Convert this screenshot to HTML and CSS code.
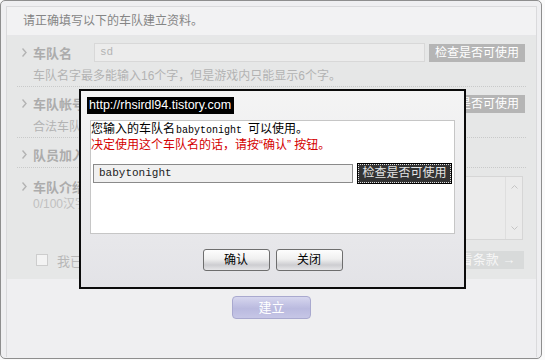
FILE: index.html
```html
<!DOCTYPE html>
<html lang="zh-CN">
<head>
    <meta charset="UTF-8">
    <title>车队建立</title>
    <link rel="stylesheet" href="styles.css">
</head>
<body>
<div class="frame">
    <div class="panel">
        <div class="notice">请正确填写以下的车队建立资料。</div>
        <div class="team-form">
            <div class="row">
                <div class="field">
                    <span class="arrow"><svg width="5" height="9" viewBox="0 0 5 9"><polyline points="0.5,0.5 4,4.5 0.5,8.5" fill="none" stroke="#b3b3b3" stroke-width="1.4"/></svg></span>
                    <span class="label">车队名</span>
                    <span class="text-input">sd</span>
                    <span class="btn-check">检查是否可使用</span>
                </div>
                <p class="hint">车队名字最多能输入16个字，但是游戏内只能显示6个字。</p>
            </div>
            <div class="row">
                <div class="field">
                    <span class="arrow"><svg width="5" height="9" viewBox="0 0 5 9"><polyline points="0.5,0.5 4,4.5 0.5,8.5" fill="none" stroke="#b3b3b3" stroke-width="1.4"/></svg></span>
                    <span class="label">车队帐号</span>
                    <span class="text-input"></span>
                    <span class="btn-check">检查是否可使用</span>
                </div>
                <p class="hint">合法车队</p>
            </div>
            <div class="row">
                <div class="field">
                    <span class="arrow"><svg width="5" height="9" viewBox="0 0 5 9"><polyline points="0.5,0.5 4,4.5 0.5,8.5" fill="none" stroke="#b3b3b3" stroke-width="1.4"/></svg></span>
                    <span class="label">队员加入方式</span>
                </div>
            </div>
            <div class="row row-intro">
                <div class="intro-side">
                    <div class="field">
                        <span class="arrow"><svg width="5" height="9" viewBox="0 0 5 9"><polyline points="0.5,0.5 4,4.5 0.5,8.5" fill="none" stroke="#b3b3b3" stroke-width="1.4"/></svg></span>
                        <span class="label">车队介绍</span>
                    </div>
                    <p class="hint">0/100汉字</p>
                </div>
                <div class="text-area">
                    <div class="scroll">
                        <svg width="7" height="4" viewBox="0 0 7 4"><polyline points="0.5,3.5 3.5,0.5 6.5,3.5" fill="none" stroke="#c4c4c4"/></svg>
                        <svg width="7" height="4" viewBox="0 0 7 4"><polyline points="0.5,0.5 3.5,3.5 6.5,0.5" fill="none" stroke="#c4c4c4"/></svg>
                    </div>
                </div>
            </div>
            <div class="agree">
                <span class="check-box"></span>
                <span class="agree-text">我已经阅读并同意车队条款</span>
                <span class="btn-terms">查看条款 &rarr;</span>
            </div>
        </div>
        <div class="actions"><span class="btn-create">建立</span></div>
    </div>
</div>

<!-- 弹出框 -->
<div class="dialog">
    <div class="dialog-title">http://rhsirdl94.tistory.com</div>
    <div class="dialog-body">
        <p class="msg"><span>您输入的车队名</span><span class="mono">babytonight</span><span>可以使用。</span></p>
        <p class="msg msg-red">决定使用这个车队名的话，请按“确认” 按钮。</p>
        <div class="dialog-field">
            <span class="dialog-input mono">babytonight</span>
            <span class="btn-dark">检查是否可使用</span>
        </div>
    </div>
    <div class="dialog-buttons">
        <span class="btn-win">确认</span>
        <span class="btn-win">关闭</span>
    </div>
</div>
</body>
</html>
```

FILE: styles.css
```css
body {
    margin: 0;
    background: #fafafa;
    font: 12px "Liberation Sans", "Noto Sans CJK SC", sans-serif;
}

p {
    margin: 0;
}

.frame {
    width: 542px;
    height: 359px;
    box-sizing: border-box;
    border: 1px solid #8e8e8e;
    border-radius: 5px;
    background: #efeff1;
    padding: 5px 4px 0 5px;
}

.panel {
    height: 351px;
    box-sizing: border-box;
    border: 1px solid #dadadc;
    border-bottom: none;
}

.notice {
    height: 28px;
    line-height: 28px;
    padding-left: 16px;
    color: #858585;
    background: #f2f2f3;
    border-bottom: 1px solid #e6e6e8;
}

.team-form {
    background: #e6e7e7;
    padding-bottom: 10px;
}

.row {
    margin: 0 10px;
    padding: 7px 1px 3px 5px;
    border-bottom: 1px dotted #c9caca;
}

.field {
    display: flex;
    align-items: center;
    height: 19px;
}

.arrow {
    display: flex;
    width: 5px;
    margin-right: 6px;
}

.label {
    width: 61px;
    font-size: 13px;
    font-weight: bold;
    color: #acacac;
    white-space: nowrap;
}

.text-input {
    flex: 1;
    height: 19px;
    box-sizing: border-box;
    border: 1px solid #d8d8d8;
    background: #ececec;
    color: #b4b4b4;
    font-family: "Liberation Mono", monospace;
    font-size: 11px;
    line-height: 17px;
    padding-left: 5px;
}

.btn-check {
    width: 96px;
    height: 18px;
    margin-left: 4px;
    background: #b5b5b5;
    color: #fff;
    text-align: center;
    line-height: 18px;
    font-size: 12px;
}

.hint {
    margin-top: 7px;
    padding-left: 11px;
    line-height: 14px;
    color: #b3b3b3;
}

.row-intro {
    display: flex;
    border-bottom: none;
    padding-top: 8px;
    padding-bottom: 0;
}

.row-intro .hint {
    margin-top: 1px;
    color: #c0c0c0;
}

.intro-side {
    width: 72px;
}

.row-intro .field {
    margin-top: 1px;
}

.text-area {
    flex: 1;
    height: 64px;
    box-sizing: border-box;
    border: 1px solid #d6d6d6;
    background: #ebebeb;
    display: flex;
    justify-content: flex-end;
    margin-right: 2px;
}

.scroll {
    width: 16px;
    border-left: 1px solid #dedede;
    display: flex;
    flex-direction: column;
    justify-content: space-between;
    align-items: center;
    padding: 8px 0 9px;
}

.agree {
    display: flex;
    align-items: center;
    height: 18px;
    margin-top: 11px;
    padding: 0 12px 0 22px;
}

.check-box {
    width: 10px;
    height: 10px;
    border: 1px solid #cdcdcd;
    background: #f3f3f3;
    margin-left: 7px;
}

.agree-text {
    flex: 1;
    margin-left: 9px;
    color: #b8b8b8;
    font-size: 13px;
}

.btn-terms {
    width: 86px;
    height: 18px;
    line-height: 18px;
    text-align: center;
    background: #d8dada;
    color: #f6f6f6;
    font-size: 13px;
}

.actions {
    display: flex;
    justify-content: center;
    padding-top: 17px;
}

.btn-create {
    width: 79px;
    height: 23px;
    box-sizing: border-box;
    border: 1px solid #a9a9cf;
    border-radius: 4px;
    background: linear-gradient(#d6d6ee, #babadf 55%, #c6c6e6);
    color: #fff;
    text-align: center;
    line-height: 21px;
    font-size: 13px;
}

/* 弹出框 */
.dialog {
    position: absolute;
    left: 79px;
    top: 89px;
    width: 387px;
    height: 200px;
    box-sizing: border-box;
    border: 2px solid #0b0b0b;
    background: linear-gradient(#f4f4f4, #e3e3e7);
    padding: 6px 6px 0;
}

.dialog-title {
    display: inline-block;
    height: 17px;
    line-height: 17px;
    padding: 0 3px 0 2px;
    background: #000;
    color: #fff;
    font-size: 12.5px;
}

.dialog-body {
    margin: 6px 3px 0;
    height: 114px;
    box-sizing: border-box;
    border: 1px solid #c6c6c6;
    background: #fff;
    padding: 1px 0 0 0;
}

.msg {
    display: flex;
    align-items: baseline;
    line-height: 14px;
    color: #000;
}

.msg-red {
    color: #d40000;
}

.mono {
    font-family: "Liberation Mono", monospace;
    font-size: 10px;
}

.msg .mono {
    margin: 0 6px 0 1px;
}

.dialog-field {
    display: flex;
    margin: 12px 0 0 2px;
}

.dialog-input {
    width: 260px;
    height: 19px;
    box-sizing: border-box;
    border: 1px solid #8a8a8a;
    background: #f0f0f0;
    color: #222;
    line-height: 17px;
    padding-left: 5px;
    font-size: 11px;
}

.btn-dark {
    width: 93px;
    height: 19px;
    box-sizing: border-box;
    margin-left: 5px;
    border: 1px dotted #e0e0e0;
    outline: 1px solid #000;
    background: #333;
    color: #e4e4e4;
    text-align: center;
    line-height: 17px;
}

.dialog-buttons {
    display: flex;
    justify-content: center;
    gap: 6px;
    margin-top: 15px;
}

.btn-win {
    width: 67px;
    height: 22px;
    box-sizing: border-box;
    border: 1px solid #6e6e6e;
    border-radius: 3px;
    background: linear-gradient(#fdfdfd, #f0f0f0 45%, #cdcdd1 75%, #e6e6e8);
    color: #000;
    text-align: center;
    line-height: 20px;
}
```
